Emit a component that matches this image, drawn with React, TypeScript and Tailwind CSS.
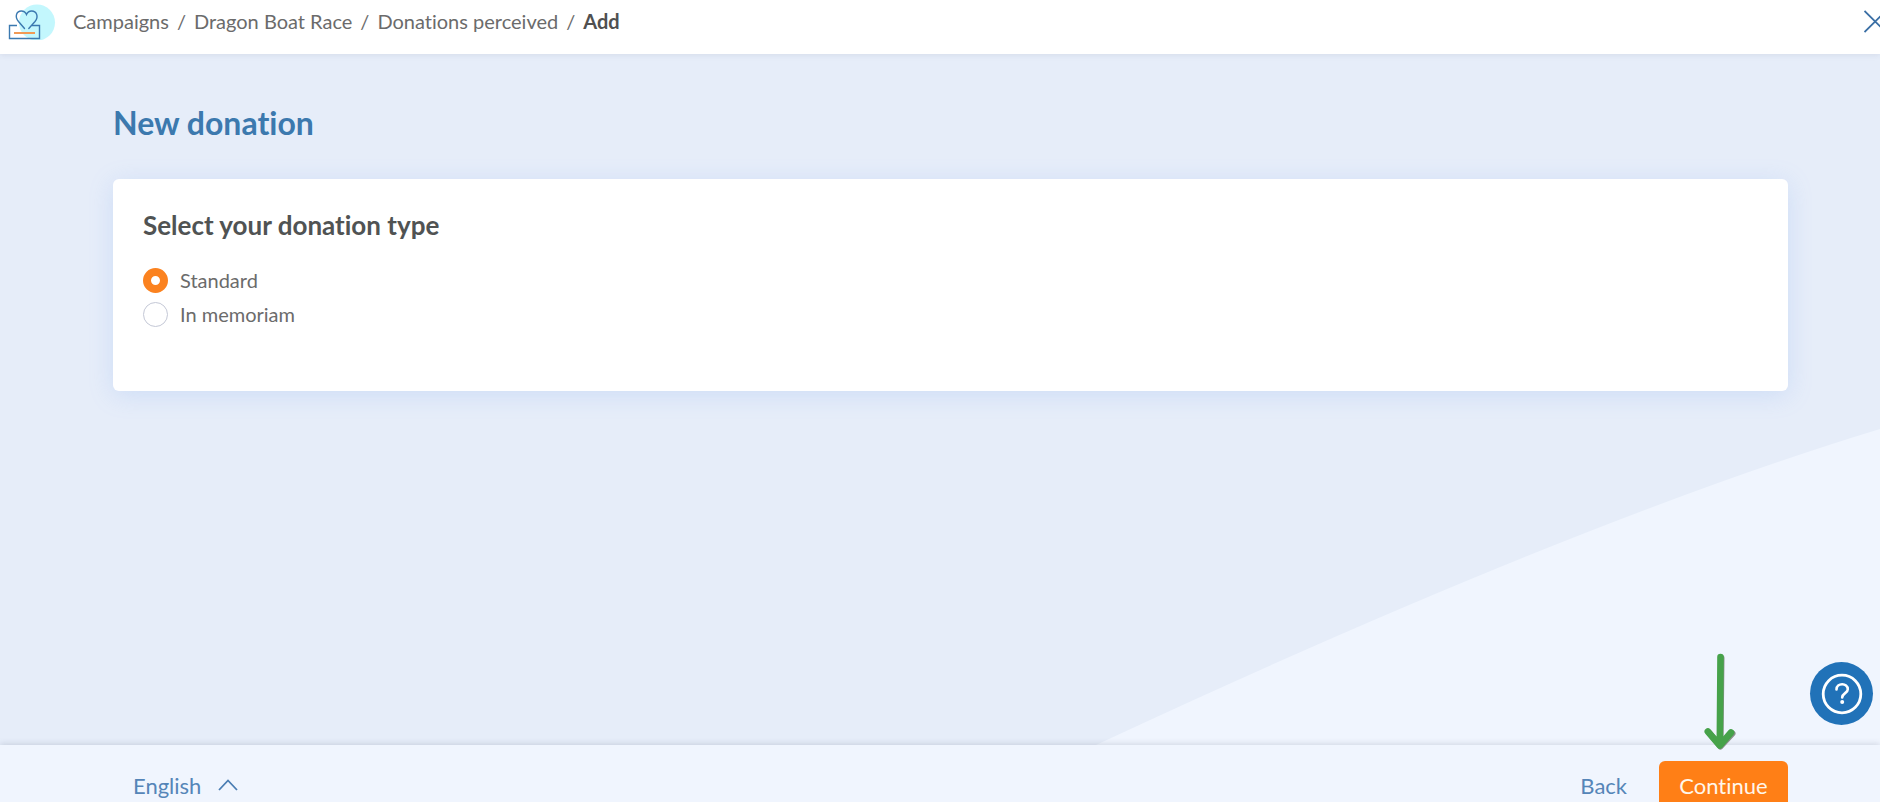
import React, { useState } from 'react';
import { clsx } from 'clsx';

const crumbs = ['Campaigns', 'Dragon Boat Race', 'Donations perceived'];

const donationTypes = [
  { id: 'standard', label: 'Standard' },
  { id: 'memoriam', label: 'In memoriam' },
];

const Logo: React.FC = () => (
  <svg width="48" height="40" viewBox="0 0 48 40" fill="none" aria-hidden="true">
    <circle cx="29" cy="22.5" r="18" fill="#c3f7fd" />
    <path d="M9 25.5H1.5V38.5H31.5V25.5H24" stroke="#3b79b0" strokeWidth="1.4" />
    <path
      d="M16.5 28.5L10.500 21.500C8.500 19 7.800 16.500 8.600 14.200C10.200 9.800 16.500 9.800 18.500 14.500C20.500 9.800 26.800 9.800 28.600 14.200C29.500 16.500 29 19 27 21.500L20.800 28.500"
      stroke="#3b79b0"
      strokeWidth="1.4"
      strokeLinecap="round"
    />
    <path d="M6 33H27" stroke="#f19a55" strokeWidth="2" />
  </svg>
);

const Header: React.FC = () => (
  <header className="relative z-10 flex h-[54px] shrink-0 items-start bg-white pl-2 shadow-[0_1px_6px_rgba(60,70,100,0.10)]">
    <Logo />
    <nav aria-label="Breadcrumb" className="ml-[17px] mt-[7px] flex-1">
      <ol className="flex items-center gap-2 text-[20px] leading-7 text-[#6b6b6b]">
        {crumbs.map((crumb) => (
          <li key={crumb} className="flex items-center gap-2">
            <a href="#" className="hover:underline">{crumb}</a>
            <span>/</span>
          </li>
        ))}
        <li className="font-bold text-[#505050]">Add</li>
      </ol>
    </nav>
    <button type="button" aria-label="Close" className="-mr-2 mt-2.5">
      <svg width="24" height="24" viewBox="0 0 24 24" stroke="#3b6fa5" strokeWidth="1.8" fill="none">
        <path d="M0.500 1L22 22M22 1L0.500 22" />
      </svg>
    </button>
  </header>
);

const HelpButton: React.FC = () => (
  <button
    type="button"
    aria-label="Help"
    className="absolute bottom-5 right-[7px] flex size-[63px] items-center justify-center rounded-full bg-[#2172b8]"
  >
    <svg width="42" height="42" viewBox="0 0 42 42" fill="none" stroke="white" strokeLinecap="round">
      <circle cx="21" cy="21" r="18.8" strokeWidth="2.8" />
      <path d="M15.500 16.500C15.500 9.500 26.800 9.500 26.800 16.200C26.800 20.200 21.200 20 21.200 24.500" strokeWidth="2.600" />
      <circle cx="21.200" cy="29" r="2" fill="white" stroke="none" />
    </svg>
  </button>
);

const Footer: React.FC = () => (
  <footer className="relative z-10 flex h-[57px] shrink-0 items-start justify-between bg-[#f0f5fe] pl-[133px] pr-[92px] pt-4 text-[22px] text-[#5585b8] shadow-[0_-1px_6px_rgba(60,70,100,0.18)]">
    <div className="relative flex h-12 items-center">
      <select aria-label="Language" className="appearance-none bg-transparent pr-9">
        <option>English</option>
      </select>
      <svg className="pointer-events-none absolute right-0" width="20" height="12" viewBox="0 0 20 12" fill="none" stroke="#4a7db3" strokeWidth="1.8">
        <path d="M1 11L10 1.500L19 11" />
      </svg>
    </div>
    <div className="flex items-center gap-8">
      <button type="button" className="h-12">Back</button>
      <div className="relative">
        <button type="button" className="h-12 w-[129px] rounded-md bg-[#ff7f16] text-[#fff6ea]">
          Continue
        </button>
        <svg className="pointer-events-none absolute bottom-full left-[42px] mb-2.5" width="38" height="98" viewBox="0 0 38 98" fill="none" strokeLinecap="round" strokeLinejoin="round">
          <path d="M20.500 5L19.500 92M8 79.500L19.500 93.500L31.500 80.500" stroke="#8c8f8c" strokeWidth="6" />
          <path d="M19.500 4L18.800 91M6.800 78.500L18.800 92.500L30 79.500" stroke="#46a24a" strokeWidth="6.600" />
          <path d="M12 84L18.800 92L25 84Z" fill="#46a24a" />
        </svg>
      </div>
    </div>
  </footer>
);

export default function App() {
  const [type, setType] = useState('standard');

  return (
    <div className="flex h-screen flex-col overflow-hidden bg-[#e6edf9] font-['Lato',sans-serif] [font-variant-ligatures:none]">
      <Header />

      <main className="relative flex-1 pl-[113px] pr-[92px] pt-[49px]">
        <svg className="absolute bottom-0 right-0 h-[316px] w-[784px]" viewBox="0 0 784 316" aria-hidden="true">
          <path d="M0 316Q478 93 784 0V316Z" fill="#f0f5fe" />
        </svg>

        <h1 className="text-[32px] font-bold leading-10 text-[#3c79ae]">New donation</h1>

        <section className="relative mt-9 rounded-md bg-white px-[30px] pb-[60px] pt-7 shadow-[0_4px_24px_rgba(120,165,240,0.22)]">
          <fieldset>
            <legend className="text-[26px] font-bold leading-9 text-[#505353]">Select your donation type</legend>
            <div className="mt-5 flex flex-col">
              {donationTypes.map(({ id, label }) => (
                <label key={id} className="flex h-[34px] items-center gap-3 text-[20px] text-[#6b6b6b]">
                  <input
                    type="radio"
                    name="donation-type"
                    value={id}
                    checked={type === id}
                    onChange={() => setType(id)}
                    className={clsx(
                      'size-[25px] appearance-none rounded-full bg-white',
                      type === id ? 'border-8 border-[#fb821f]' : 'border border-[#c4c8d6]'
                    )}
                  />
                  {label}
                </label>
              ))}
            </div>
          </fieldset>
        </section>

        <HelpButton />
      </main>

      <Footer />
    </div>
  );
}
